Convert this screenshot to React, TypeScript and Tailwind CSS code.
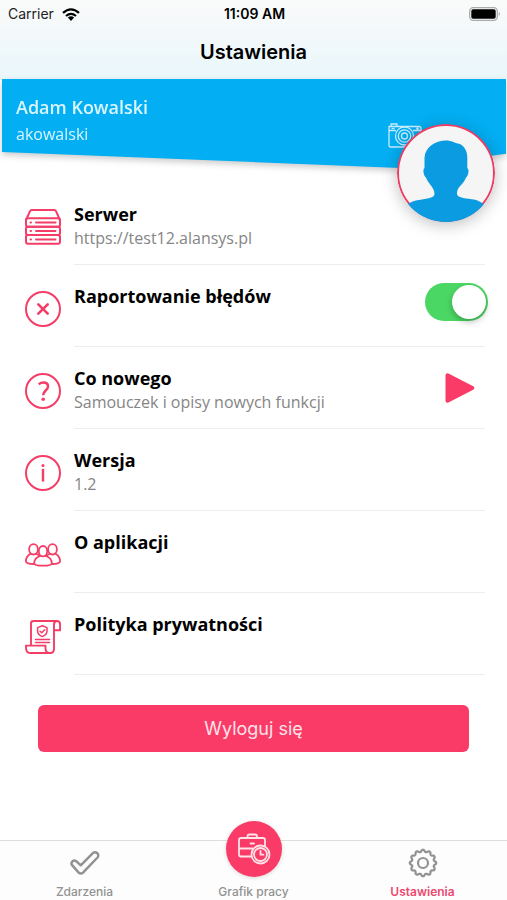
import { useState } from 'react'
import type { ReactNode } from 'react'

type RowProps = {
    icon: ReactNode
    title: ReactNode
    subtitle?: string
    action?: ReactNode
}

const SettingsRow = ({ icon, title, subtitle, action }: RowProps) => {
    return (
        <li className="flex h-[82px] pl-[25px] pr-[22px]">
            <div className="flex w-[49px] shrink-0 pt-[26px] text-[#f43d67]">{icon}</div>
            <div className="flex min-w-0 grow justify-between border-b border-[#ededed] pt-[18px]">
                <div className="min-w-0 pt-px">
                    <h2 className="text-lg leading-6 font-bold text-black">{title}</h2>
                    {subtitle && <p className="text-base leading-6 text-[#858585]">{subtitle}</p>}
                </div>
                {action}
            </div>
        </li>
    )
}

const iconProps = {
    width: 36,
    height: 36,
    viewBox: '0 0 36 36',
    fill: 'none',
    stroke: 'currentColor',
    strokeWidth: 2,
    strokeLinecap: 'round',
    strokeLinejoin: 'round',
    'aria-hidden': true,
} as const

const ServerIcon = () => (
    <svg {...iconProps}>
        <path d="M1.500 10 5 2.200Q5.500 1 6.800 1H29.200Q30.500 1 31 2.200L34.500 10" />
        <rect x="1" y="9.300" width="34" height="8.400" rx="2" />
        <rect x="1" y="17.700" width="34" height="8.400" rx="2" />
        <rect x="1" y="26.100" width="34" height="8.700" rx="2" />
        <path d="M11 13.500H30.500M11 21.900H30.500M11 30.400H30.500M5.500 13.500H6M5.500 21.900H6M5.500 30.400H6" />
    </svg>
)

const ErrorIcon = () => (
    <svg {...iconProps}>
        <circle cx="18" cy="18" r="17" />
        <path strokeWidth="2.600" d="M13.300 13.300 22.700 22.700M22.700 13.300 13.300 22.700" />
    </svg>
)

const HelpIcon = () => (
    <svg {...iconProps}>
        <circle cx="18" cy="18" r="17" />
        <path strokeWidth="2.500" strokeLinecap="butt" d="M13.700 11.200C15.300 10.100 16.900 9.600 18.400 9.600C21 9.600 23 10.900 23 13.400C23 17.500 18.200 17.600 18.200 22.200" />
        <circle cx="18.200" cy="26.300" r="1.800" fill="currentColor" stroke="none" />
    </svg>
)

const InfoIcon = () => (
    <svg {...iconProps}>
        <circle cx="18" cy="18" r="17" />
        <path strokeWidth="2.400" strokeLinecap="butt" d="M18 13.800V26.600" />
        <circle cx="18" cy="10.500" r="1.500" fill="currentColor" stroke="none" />
    </svg>
)

const PeopleIcon = () => (
    <svg {...iconProps} strokeWidth={1.8}>
        <ellipse cx="8.500" cy="12.300" rx="4.400" ry="5.200" />
        <ellipse cx="27.500" cy="12.300" rx="4.400" ry="5.200" />
        <ellipse cx="18" cy="14.200" rx="4.200" ry="5.200" fill="white" />
        <path d="M5.600 16.800C2.600 18.500 .9 20.800 .9 24.300C.9 25.900 4 27 9.200 27" />
        <path d="M30.400 16.800C33.400 18.500 35.100 20.800 35.100 24.300C35.100 25.900 32 27 26.800 27" />
        <path d="M11.200 16.800 13.800 18.300M24.800 16.800 22.200 18.300" />
        <path d="M15.300 19C11.300 20.200 9.200 22.500 9.200 26.400C9.200 29.300 26.800 29.300 26.800 26.400C26.800 22.500 24.700 20.200 20.700 19" />
    </svg>
)

const PolicyIcon = () => (
    <svg {...iconProps} strokeWidth={1.9}>
        <path d="M6 26V4.500Q6 2 8.500 2H32Q35.100 2 35.100 5.500V11.300H29" />
        <path d="M32 2Q29 2 29 5.500V30Q29 34 25 34" />
        <path d="M25 34H5Q1 34 1 28.500V26.600H20.500V29.500Q20.500 34 25 34Z" />
        <path strokeWidth="1.500" d="M17.300 6.800 22 8.600V12.300Q22 15.600 17.300 17.600Q12.600 15.600 12.600 12.300V8.600Z" />
        <path strokeWidth="1.500" d="M15 12.200 16.700 13.700 19.700 10.700M10.500 20.400H24.500M10.500 23.400H24.500" />
    </svg>
)

const CameraIcon = () => (
    <svg width="34" height="26" viewBox="0 0 34 26" fill="none" stroke="#c8edff" strokeWidth="1.300" strokeLinejoin="round" aria-hidden="true">
        <path d="M3 3.500V1H9V3.500M1 3.500H31Q33 3.500 33 5.500V22Q33 24 31 24H2.500Q1 24 1 22.500ZM1 7.500H8M25 7.500H33" />
        <circle cx="16.500" cy="13" r="9" fill="#03aef2" />
        <circle cx="16.500" cy="13" r="6.200" />
        <circle cx="16.500" cy="13" r="3" />
        <circle cx="29.500" cy="5.600" r=".7" />
        <path d="M3.500 5.500H6.500" />
    </svg>
)

const AvatarImage = () => (
    <svg viewBox="-2 -2 98 98" className="size-full" aria-hidden="true">
        <circle cx="47" cy="47" r="48" fill="#f5f5f5" stroke="#ed3b62" strokeWidth="2" />
        <path
            fill="#0a9be0"
            d="M47 14.500C53 14.500 55 17 59 17.500C66 19 69 27 68.300 34V42C70.500 43 69.500 50 67 51.500C65 58 58.500 60.500 58 66.500V68C58 72 69 72.500 75 73.500C79 74.500 82 76 86 79V96H8V79C11 76 16 74.500 20 74C28 72.700 35.500 72 35.500 68C35.500 61 29 58 27 51.500C24.500 50 23.500 43 25.500 42V32C26 21 36 14.500 47 14.500Z"
        />
    </svg>
)

const WifiIcon = () => (
    <svg width="18" height="13" viewBox="0 0 18 13" fill="none" stroke="black" strokeWidth="2.200" aria-hidden="true">
        <path d="M1 4.800Q9-2.200 17 4.800M4 8Q9 3.700 14 8" />
        <path d="M5.900 9.600Q9 7 12.100 9.600L9 12.900Z" fill="black" stroke="none" />
    </svg>
)

const BatteryIcon = () => (
    <svg width="32" height="14" viewBox="0 0 32 14" aria-hidden="true">
        <rect x=".7" y=".7" width="27.600" height="12.600" rx="3.500" fill="none" stroke="#a9abab" strokeWidth="1.300" />
        <rect x="2.300" y="2.300" width="24.400" height="9.400" rx="1.800" fill="black" />
        <path d="M29.800 4.800Q32 7 29.800 9.200Z" fill="#a9abab" />
    </svg>
)

const CheckIcon = () => (
    <svg width="30" height="30" viewBox="0 0 30 30" fill="none" stroke="#929292" strokeWidth="2.500" strokeLinejoin="round" aria-hidden="true">
        <path d="M2.100 17.200A2.900 2.900 0 0 1 6.200 13.200L10.700 17.300L22.600 5.400A3.050 3.050 0 0 1 27.500 9.500L13 24.700Q10.800 26.200 8.700 24.700Z" />
    </svg>
)

// the rim alternates between rounded teeth and shallow notches
const gearPath = (() => {
    const steps = 120
    const points: string[] = []
    for (let i = 0; i < steps; i++) {
        const angle = (i / steps) * Math.PI * 2
        const radius = 12.2 + Math.tanh(Math.cos(angle * 12) * 1.5) * 1.1
        points.push(`${(15 + radius * Math.sin(angle)).toFixed(2)} ${(15 - radius * Math.cos(angle)).toFixed(2)}`)
    }
    return `M${points.join('L')}Z`
})()

const GearIcon = () => (
    <svg width="30" height="30" viewBox="0 0 30 30" fill="none" stroke="#929292" strokeWidth="2.200" strokeLinejoin="round" aria-hidden="true">
        <path d={gearPath} />
        <circle cx="15" cy="15" r="5" />
    </svg>
)

const BriefcaseIcon = () => (
    <svg width="34" height="32" viewBox="0 0 34 32" fill="none" stroke="#ffe3e9" strokeWidth="1.800" strokeLinecap="round" strokeLinejoin="round" aria-hidden="true">
        <path d="M10.500 5V3.500Q10.500 1.500 12.500 1.500H18Q20 1.500 20 3.500V5" />
        <path d="M28 13V7Q28 5 26 5H4Q2 5 2 7V21.500Q2 23.500 4 23.500H14M2 15.500H15.500M13.500 10.500H17" />
        <circle cx="23.500" cy="21.500" r="9" fill="#fb3b67" />
        <circle cx="23.500" cy="21.500" r="6.500" />
        <path d="M23.500 18V21.700H26.500" />
    </svg>
)

export default function App() {
    const [reporting, setReporting] = useState(true)

    return (
        <div className="flex min-h-screen flex-col bg-white font-['Open_Sans','Noto_Sans',sans-serif]">
            <header className="h-[79px] bg-linear-to-b from-[#fafafa] to-[#e9f7fb] font-[Inter,sans-serif] text-black">
                <div className="grid h-7 grid-cols-3 items-center pr-[6px] pl-2 text-sm">
                    <div className="flex items-center gap-2 text-[#222]">
                        Carrier <WifiIcon />
                    </div>
                    <time className="text-center font-semibold">11:09 AM</time>
                    <div className="flex justify-end">
                        <BatteryIcon />
                    </div>
                </div>
                <h1 className="pt-2 text-center text-xl leading-8 font-semibold">Ustawienia</h1>
            </header>

            <section className="relative h-[104px]">
                <div className="pr-px pl-[2px] drop-shadow-[0_3px_3px_rgba(0,0,0,0.2)]">
                    <div className="h-[89px] bg-[#03aef2] pt-4 pl-[14px] text-[#d9f5ff] [clip-path:polygon(0_0,100%_0,100%_84%,79%_100%,0_82%)]">
                        <p className="text-lg leading-6 font-semibold">Adam Kowalski</p>
                        <p className="pt-[3px] text-base leading-6">akowalski</p>
                    </div>
                </div>
                <button type="button" aria-label="Zmień zdjęcie" className="absolute top-11 right-[85px]">
                    <CameraIcon />
                </button>
                <div className="absolute top-[45px] right-3 size-[98px] overflow-hidden rounded-full shadow-[0_3px_16px_rgba(0,0,0,0.25)]">
                    <AvatarImage />
                </div>
            </section>

            <main className="grow">
                <ul>
                    <SettingsRow icon={<ServerIcon />} title="Serwer" subtitle="https://test12.alansys.pl" />
                    <SettingsRow
                        icon={<ErrorIcon />}
                        title={<label htmlFor="reporting">Raportowanie błędów</label>}
                        action={
                            <input
                                id="reporting"
                                type="checkbox"
                                role="switch"
                                checked={reporting}
                                onChange={(e) => setReporting(e.target.checked)}
                                className="-mr-[3px] flex h-[38px] w-[63px] shrink-0 appearance-none items-center rounded-full bg-gray-300 px-[2px] before:size-[34px] before:rounded-full before:bg-white before:shadow-[0_3px_6px_rgba(0,0,0,0.25)] checked:justify-end checked:bg-[#4bd763]"
                            />
                        }
                    />
                    <SettingsRow
                        icon={<HelpIcon />}
                        title="Co nowego"
                        subtitle="Samouczek i opisy nowych funkcji"
                        action={
                            <button type="button" aria-label="Odtwórz samouczek" className="mr-[9px] flex h-[46px] items-center">
                                <svg width="32" height="32" viewBox="0 0 32 32" fill="#fb3b67" stroke="#fb3b67" strokeWidth="4" strokeLinejoin="round" aria-hidden="true">
                                    <path d="M3.500 3.300V28.700L28.300 16Z" />
                                </svg>
                            </button>
                        }
                    />
                    <SettingsRow icon={<InfoIcon />} title="Wersja" subtitle="1.2" />
                    <SettingsRow icon={<PeopleIcon />} title={<a href="#o-aplikacji">O aplikacji</a>} />
                    <SettingsRow icon={<PolicyIcon />} title={<a href="#polityka">Polityka prywatności</a>} />
                </ul>
                <div className="px-[38px] pt-[30px] pb-10">
                    <button type="button" className="h-[47px] w-full rounded-md bg-[#fb3b67] font-[Inter,sans-serif] text-lg text-[#ffe3e9]">
                        Wyloguj się
                    </button>
                </div>
            </main>

            <nav className="flex h-[60px] items-end border-t border-[#dedede] bg-[#fdfdfd] font-[Inter,sans-serif] text-xs font-medium text-[#929292]">
                <a href="#zdarzenia" className="flex flex-1 flex-col items-center">
                    <CheckIcon />
                    <span className="pt-[6px] leading-4">Zdarzenia</span>
                </a>
                <a href="#grafik" className="flex flex-1 flex-col items-center">
                    <span className="flex size-14 items-center justify-center rounded-full bg-[#fb3b67] shadow-[0_1px_4px_rgba(0,0,0,0.15)]">
                        <BriefcaseIcon />
                    </span>
                    <span className="pt-[7px] leading-4">Grafik pracy</span>
                </a>
                <a href="#ustawienia" aria-current="page" className="flex flex-1 flex-col items-center">
                    <GearIcon />
                    <span className="pt-[6px] leading-4 font-semibold text-[#ed4a70]">Ustawienia</span>
                </a>
            </nav>
        </div>
    )
}
